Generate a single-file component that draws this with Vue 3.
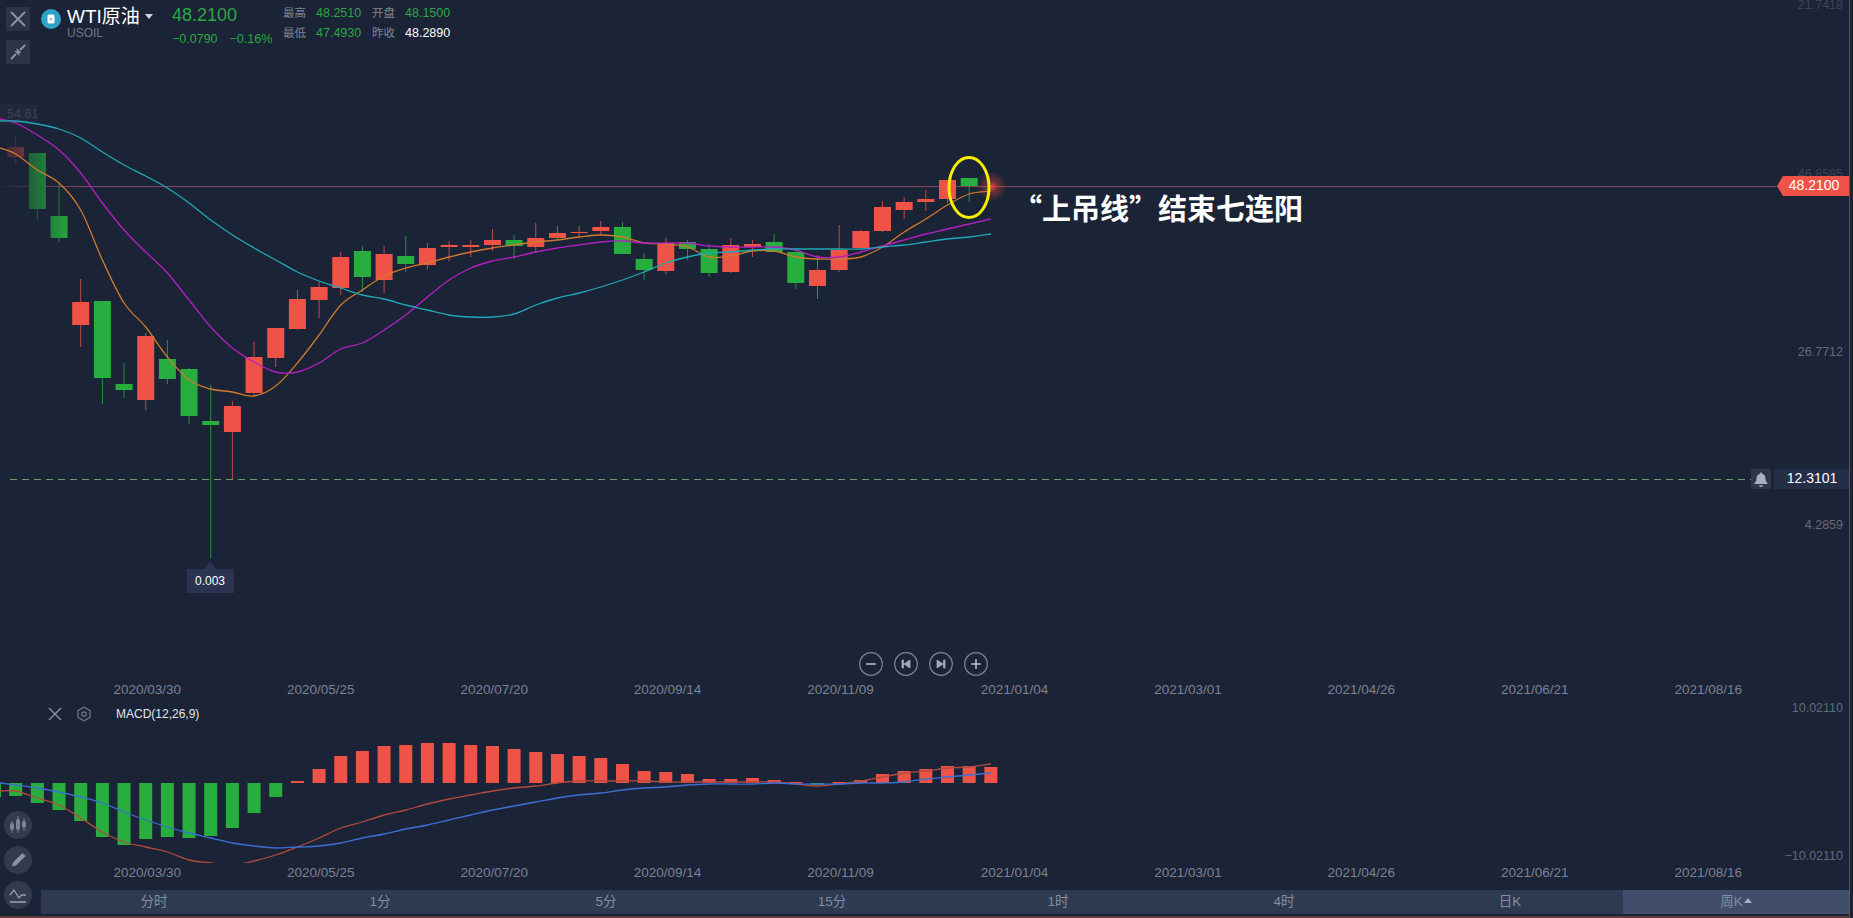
<template>
  <div class="page">
    <!-- main k-line pane -->
    <section class="main-pane">
      <svg class="chart" viewBox="0 0 1853 680" width="1853" height="680">
        <defs>
          <linearGradient id="left-fade" x1="0" x2="1" y1="0" y2="0">
            <stop offset="0" stop-color="#1b2336" stop-opacity="0.92" />
            <stop offset="1" stop-color="#1b2336" stop-opacity="0" />
          </linearGradient>
          <radialGradient id="last-glow">
            <stop offset="0" stop-color="#ff4a3c" stop-opacity="0.9" />
            <stop offset="0.35" stop-color="#ff4a3c" stop-opacity="0.35" />
            <stop offset="1" stop-color="#ff4a3c" stop-opacity="0" />
          </radialGradient>
        </defs>

        <text class="axis faint" x="1843" y="6" text-anchor="end">21.7418</text>
        <text class="axis faint" x="1843" y="175" text-anchor="end">46.8585</text>
        <text class="axis" x="1843" y="353" text-anchor="end">26.7712</text>
        <text class="axis" x="1843" y="526" text-anchor="end">4.2859</text>

        <line x1="0" x2="1777" y1="186.5" y2="186.5" stroke="#84465a" />
        <line x1="10" x2="1751" y1="479.5" y2="479.5" stroke="#6a9a6c" stroke-dasharray="7 5" />

        <g v-for="c in candles" :key="c.i" :fill="tone(c.t)" :stroke="tone(c.t)">
          <line :x1="cx(c.i)" :x2="cx(c.i)" :y1="c.wt" :y2="c.wb" stroke-width="1" stroke-opacity="0.8" />
          <rect :x="cx(c.i) - 8.5" :y="c.top" width="17" :height="c.bot - c.top" stroke="none" />
        </g>

        <rect x="0" y="100" width="75" height="150" fill="url(#left-fade)" />
        <rect x="0" y="103" width="38" height="22" fill="#232b3e" opacity="0.7" />
        <text class="axis faint" x="7" y="115">54.61</text>

        <path :d="smooth(ma5)" class="ma" stroke="#cf7a2b" />
        <path :d="smooth(ma10)" class="ma" stroke="#b41fc4" stroke-width="1.6" />
        <path :d="smooth(ma20)" class="ma" stroke="#1fa9b8" />

        <circle cx="992" cy="186.5" r="15" fill="url(#last-glow)" />
        <ellipse cx="969" cy="187.5" rx="20" ry="30" fill="none" stroke="#f8f000" stroke-width="3" />

        <!-- lowest price tip -->
        <path d="M187 569h17l6-8 6 8h18v24h-47z" fill="#2a3450" />
        <text class="tip" x="210" y="582" text-anchor="middle">0.003</text>

        <!-- right price tags -->
        <path d="M1783 176h68v20h-68l-6-10z" fill="#ef5347" />
        <text class="tag" x="1814" y="186.5" text-anchor="middle">48.2100</text>
        <rect x="1751" y="469" width="20" height="20" rx="1" fill="#2e3547" />
        <path
          d="M1761 472.5a1.2 1.2 0 0 1 1.2 1.2c2.4.7 3.3 2.6 3.3 5 0 2 .8 3 2 4.2v1.1h-13v-1.1c1.200-1.200 2-2.200 2-4.200 0-2.400.9-4.300 3.300-5a1.200 1.200 0 0 1 1.200-1.200zM1759 485.200h4a2 1.800 0 0 1-4 0z"
          fill="#a9afbd"
        />
        <rect x="1774" y="469" width="76" height="20" rx="1" fill="#252e47" />
        <text class="tag" x="1812" y="479.500" text-anchor="middle">12.3101</text>
      </svg>

      <text-note />
      <div class="note">“上吊线”结束七连阳</div>

      <header class="quote-head">
        <div class="tool-col">
          <button class="square-btn">
            <svg width="24" height="24" viewBox="0 0 24 24"><path d="M5 5l14 14M19 5L5 19" stroke="#8f95a3" stroke-width="1.800" fill="none" /></svg>
          </button>
          <button class="square-btn">
            <svg width="24" height="24" viewBox="0 0 24 24">
              <path d="M5 19l5-5M19 5l-5 5" stroke="#8f95a3" stroke-width="1.800" fill="none" />
              <path d="M8.500 11l4.500.5.500 4.500zM15.500 13L11 12.500 10.500 8z" fill="#8f95a3" />
            </svg>
          </button>
        </div>
        <span class="logo">
          <svg width="20" height="20" viewBox="0 0 20 20">
            <circle cx="10" cy="10" r="10" fill="#2fa3c6" />
            <rect x="6.500" y="5.500" width="7" height="9" rx="1.500" fill="#fff" />
            <rect x="9" y="9" width="2" height="2.500" fill="#7cc6dc" />
          </svg>
        </span>
        <div class="name-col">
          <div class="name">WTI原油<i class="caret-down"></i></div>
          <div class="code">USOIL</div>
        </div>
        <div class="price-col">
          <div class="price">48.2100</div>
          <div class="change"><span>−0.0790</span><span>−0.16%</span></div>
        </div>
        <dl class="stats">
          <template v-for="s in stats" :key="s.label">
            <dt>{{ s.label }}</dt>
            <dd :class="{ flat: s.flat }">{{ s.value }}</dd>
          </template>
        </dl>
      </header>

      <div class="zoom-btns">
        <svg v-for="b in zoomIcons" :key="b" width="24" height="24" viewBox="0 0 24 24">
          <circle cx="12" cy="12" r="11.300" fill="none" stroke="#7f8696" stroke-width="1.200" />
          <path :d="b" fill="#a4aab7" stroke="#a4aab7" stroke-width="0.800" />
        </svg>
      </div>
    </section>

    <div class="date-axis">
      <span v-for="d in dates" :key="d">{{ d }}</span>
    </div>

    <!-- MACD pane -->
    <section class="macd-pane">
      <svg class="chart" viewBox="0 700 1853 163" width="1853" height="163">
        <rect
          v-for="(b, i) in macdBars"
          :key="i"
          :x="cx(i) - 6.500"
          :y="Math.min(b, zero)"
          width="13"
          :height="Math.max(Math.abs(b - zero), 1.500)"
          :fill="b > zero ? '#27ae3e' : '#ef5347'"
        />
        <rect x="0" y="783" width="1" height="14" fill="#27ae3e" />
        <path :d="smooth(dif)" class="ma" stroke="#b24a3f" />
        <path :d="smooth(dea)" class="ma" stroke="#3a6fd4" />
        <text class="axis" x="1843" y="709" text-anchor="end">10.02110</text>
        <text class="axis" x="1843" y="857" text-anchor="end">−10.02110</text>
      </svg>

      <div class="macd-head">
        <svg width="16" height="16" viewBox="0 0 16 16"><path d="M2 2l12 12M14 2L2 14" stroke="#8f95a3" stroke-width="1.400" fill="none" /></svg>
        <svg width="16" height="16" viewBox="0 0 16 16">
          <path d="M8 1.200l6 3.400v6.800l-6 3.400-6-3.400V4.600z" fill="none" stroke="#6f7686" stroke-width="1.300" />
          <circle cx="8" cy="8" r="2.200" fill="none" stroke="#6f7686" stroke-width="1.300" />
        </svg>
        <span class="macd-name">MACD(12,26,9)</span>
      </div>
    </section>

    <div class="date-axis">
      <span v-for="d in dates" :key="d">{{ d }}</span>
    </div>

    <div class="foot">
      <div class="round-tools">
        <span class="round">
          <svg width="20" height="20" viewBox="0 0 20 20" fill="#7d8493">
            <rect x="2" y="8" width="4" height="7" rx="2" /><rect x="8" y="4" width="4" height="11" rx="2" /><rect x="14" y="6" width="4" height="7" rx="2" />
            <path d="M4 6v12M10 1v17M16 3v13" stroke="#7d8493" />
          </svg>
        </span>
        <span class="round">
          <svg width="20" height="20" viewBox="0 0 20 20">
            <path d="M4 16.500l1-4L14.500 3l3 3L8 15.500z" fill="#8b92a0" />
          </svg>
        </span>
        <span class="round">
          <svg width="22" height="22" viewBox="0 0 22 22" fill="none" stroke="#9aa0ad" stroke-width="1.300">
            <path d="M3 11l4-5 5 8 2.500-3H19" />
            <path d="M3 18h16" stroke-width="1.600" />
          </svg>
        </span>
      </div>
      <nav class="tabs">
        <span v-for="t in tabs" :key="t" class="tab" :class="{ active: t === '周K' }">
          {{ t }}<i v-if="t === '周K'" class="caret-up"></i>
        </span>
      </nav>
    </div>
  </div>
</template>

<script setup>
// weekly candles, all values in page pixels: [top, bottom, wickTop, wickBottom, tone]
const rows = [
  [147, 157, 137, 165, 'r'], [153, 209, 153, 220, 'g'], [216, 238, 183, 242, 'g'], [302, 325, 279, 347, 'r'],
  [301, 378, 301, 404, 'g'], [384, 390, 363, 398, 'g'], [336, 400, 333, 410, 'r'], [359, 379, 340, 384, 'g'],
  [369, 416, 368, 424, 'g'], [421, 425, 385, 558, 'g'], [406, 432, 401, 479, 'r'], [357, 393, 342, 397, 'r'],
  [328, 358, 328, 367, 'r'], [299, 329, 290, 330, 'r'], [287, 300, 282, 318, 'r'], [257, 288, 252, 295, 'r'],
  [251, 277, 246, 292, 'g'], [254, 280, 246, 293, 'r'], [256, 264, 236, 272, 'g'], [248, 265, 243, 269, 'r'],
  [245, 247, 241, 261, 'r'], [245, 247, 240, 257, 'r'], [240, 245, 229, 251, 'r'], [240, 246, 235, 259, 'g'],
  [238, 247, 223, 253, 'r'], [233, 238, 226, 240, 'r'], [232, 233, 226, 238, 'r'], [227, 231, 221, 235, 'r'],
  [227, 254, 222, 254, 'g'], [259, 270, 253, 280, 'g'], [243, 271, 238, 274, 'r'], [242, 249, 240, 260, 'g'],
  [249, 273, 244, 277, 'g'], [245, 272, 238, 273, 'r'], [244, 247, 240, 257, 'r'], [242, 252, 234, 252, 'g'],
  [252, 283, 248, 289, 'g'], [270, 286, 255, 299, 'r'], [250, 270, 225, 272, 'r'], [231, 248, 230, 248, 'r'],
  [207, 231, 201, 232, 'r'], [202, 210, 197, 219, 'r'], [199, 202, 190, 211, 'r'], [180, 199, 180, 203, 'r'],
  [178, 186, 178, 202, 'g'],
]
const candles = rows.map((r, i) => ({ i, top: r[0], bot: r[1], wt: r[2], wb: r[3], t: r[4] }))

const ma5 = [148, 154, 170, 183, 210, 260, 303, 327, 357, 380, 389, 392, 396, 386, 363, 335, 305, 290, 276, 268, 263, 257, 252, 248,
  245, 242, 240, 237, 235, 237, 243, 244, 247, 257, 256, 251, 251, 257, 259, 259, 257, 247, 232, 219, 205, 194, 191]
const ma10 = [119, 123, 135, 150, 173, 203, 230, 252, 273, 300, 327, 348, 362, 372, 372, 363, 349, 343, 330, 315, 297, 280, 268, 261,
  257, 252, 248, 245, 242, 241, 243, 243, 243, 246, 247, 247, 247, 250, 257, 257, 252, 246, 240, 234, 229, 224, 219]
const ma20 = [121, 121, 124, 129, 138, 152, 165, 176, 188, 203, 220, 235, 248, 260, 272, 281, 288, 295, 299, 305, 310, 315, 317, 317,
  314, 305, 298, 293, 287, 280, 272, 263, 257, 253, 252, 250, 249, 249, 249, 249, 249, 247, 245, 242, 239, 237, 234]

const zero = 783
const macdBars = [796, 803, 810, 821, 837, 845, 839, 837, 838, 836, 828, 813, 797, 781, 769, 756, 751, 746, 745, 743, 743, 745, 746,
  749, 752, 754, 756, 758, 764, 771, 772, 774, 779, 779, 778, 780, 782, 785, 782, 780, 774, 771, 769, 766, 766, 767]
const dif = [791, 791, 798, 805, 818, 832, 842, 847, 852, 860, 863, 865, 861, 855, 847, 838, 828, 822, 815, 810, 804, 799, 795, 791, 788,
  786, 783, 781, 781, 781, 781, 782, 782, 782, 782, 782, 782, 784, 786, 784, 781, 777, 773, 771, 768, 767, 764]
const dea = [783, 785, 788, 792, 797, 803, 812, 820, 827, 833, 838, 843, 846, 848, 847, 846, 843, 838, 834, 829, 825, 820, 815, 810, 806,
  802, 798, 795, 793, 790, 788, 787, 785, 784, 784, 784, 783, 784, 784, 784, 783, 783, 782, 779, 777, 775, 773]

const cx = (i) => 15.7 + 21.67 * i
const tone = (t) => (t === 'r' ? '#ef5347' : '#27ae3e')

// first value sits on the left page edge, the rest on candle centres
function smooth(ys) {
  const pts = ys.map((y, i) => [i === 0 ? 0 : cx(i - 1), y])
  let d = `M${pts[0][0]} ${pts[0][1]}`
  for (let i = 0; i < pts.length - 1; i++) {
    const p0 = pts[i - 1] || pts[i]
    const p1 = pts[i]
    const p2 = pts[i + 1]
    const p3 = pts[i + 2] || p2
    const c1 = [p1[0] + (p2[0] - p0[0]) / 6, p1[1] + (p2[1] - p0[1]) / 6]
    const c2 = [p2[0] - (p3[0] - p1[0]) / 6, p2[1] - (p3[1] - p1[1]) / 6]
    d += `C${c1[0].toFixed(1)} ${c1[1].toFixed(1)} ${c2[0].toFixed(1)} ${c2[1].toFixed(1)} ${p2[0].toFixed(1)} ${p2[1]}`
  }
  return d
}

const stats = [
  { label: '最高', value: '48.2510' },
  { label: '开盘', value: '48.1500' },
  { label: '最低', value: '47.4930' },
  { label: '昨收', value: '48.2890', flat: true },
]
const zoomIcons = [
  'M7.500 11.500h9v1h-9z',
  'M8 8h1.500v8H8zM16 8v8l-6-4z',
  'M14.500 8H16v8h-1.500zM8 8v8l6-4z',
  'M7.500 11.500h9v1h-9zM11.500 7.500h1v9h-1z',
]
const dates = ['2020/03/30', '2020/05/25', '2020/07/20', '2020/09/14', '2020/11/09', '2021/01/04', '2021/03/01', '2021/04/26', '2021/06/21', '2021/08/16']
const tabs = ['分时', '1分', '5分', '15分', '1时', '4时', '日K', '周K']
</script>

<style>
html, body { margin: 0; background: #1b2336; }
</style>

<style scoped>
.page {
  width: 1853px;
  height: 918px;
  box-sizing: border-box;
  display: flex;
  flex-direction: column;
  position: relative;
  overflow: hidden;
  background: #1b2336;
  border-right: 3px solid transparent;
  font-family: "Liberation Sans", "Noto Sans CJK SC", sans-serif;
  color: #8a91a1;
}
.page::after {
  content: "";
  position: absolute;
  right: 0;
  top: 0;
  bottom: 0;
  width: 1px;
  background: #6a504e;
}
.page::before {
  content: "";
  position: absolute;
  left: 0;
  right: 0;
  bottom: 0;
  height: 2px;
  background: #5e3c38;
}

.main-pane { position: relative; height: 680px; flex: none; }
.macd-pane { position: relative; height: 163px; flex: none; }
.chart { position: absolute; left: 0; top: 0; display: block; }
.ma { fill: none; stroke-width: 1.300; stroke-linejoin: round; }

.axis { font-size: 12.500px; fill: #626a7b; dominant-baseline: middle; }
.faint { fill: #3c4457; }
.tip { font-size: 12px; fill: #fff; dominant-baseline: middle; }
.tag { font-size: 14px; fill: #fff; dominant-baseline: middle; }

.note {
  position: absolute;
  left: 1013px;
  top: 187px;
  font-family: "Noto Sans CJK SC", sans-serif;
  font-size: 29px;
  line-height: 40px;
  font-weight: 700;
  color: #fff;
  white-space: nowrap;
}

.quote-head {
  position: absolute;
  left: 6px;
  top: 7px;
  display: flex;
  align-items: flex-start;
}
.tool-col { display: flex; flex-direction: column; gap: 9px; margin-right: 11px; }
.square-btn {
  width: 24px;
  height: 24px;
  padding: 0;
  border: 0;
  background: #2c3344;
  display: block;
}
.square-btn svg { display: block; }
.logo { margin: 2px 6px 0 0; height: 20px; }
.logo svg { display: block; }
.name-col { width: 105px; }
.name {
  font-size: 19px;
  line-height: 20px;
  color: #fff;
  white-space: nowrap;
}
.caret-down {
  display: inline-block;
  margin-left: 5px;
  vertical-align: 4px;
  border: 4.500px solid transparent;
  border-top: 5px solid #d5d8df;
  border-bottom: 0;
}
.code { font-size: 12px; line-height: 13px; margin-top: 0; color: #6f7686; }

.price-col { width: 111px; margin-top: -1px; }
.price { font-size: 18px; line-height: 18px; color: #2aa843; }
.change {
  display: flex;
  gap: 12px;
  margin-top: 8px;
  font-size: 12.500px;
  line-height: 14px;
  color: #2aa843;
  white-space: nowrap;
}

.stats {
  display: grid;
  grid-template-columns: 33px 56px 33px auto;
  row-gap: 6px;
  margin: -1px 0 0;
  font-size: 12.500px;
  line-height: 14px;
}
.stats dt { font-size: 11.500px; color: #7f8696; }
.stats dd { margin: 0; color: #2aa843; }
.stats dd.flat { color: #fff; }

.zoom-btns {
  position: absolute;
  left: 859px;
  top: 652px;
  display: flex;
  gap: 11px;
}

.date-axis {
  height: 20px;
  flex: none;
  display: flex;
  padding-left: 113.500px;
  font-size: 13.500px;
  line-height: 20px;
  color: #7b8292;
}
.date-axis span { width: 173.450px; flex: none; }

.macd-head {
  position: absolute;
  left: 47px;
  top: 6px;
  display: flex;
  align-items: center;
  gap: 13px;
}
.macd-head svg { display: block; }
.macd-name { margin-left: 11px; font-size: 12px; color: #e4e6ea; }

.foot { flex: none; position: relative; padding-top: 7px; }
.round-tools {
  position: absolute;
  left: 4px;
  bottom: 5px;
  display: flex;
  flex-direction: column;
  gap: 7px;
}
.round {
  width: 28px;
  height: 28px;
  border-radius: 50%;
  background: #333a4b;
  display: flex;
  align-items: center;
  justify-content: center;
}
.tabs {
  margin-left: 41px;
  width: 1808px;
  height: 24px;
  display: grid;
  grid-template-columns: repeat(8, 1fr);
  background: #2d3a52;
  font-size: 13.500px;
  line-height: 24px;
  text-align: center;
  color: #858da0;
}
.tab.active { background: #414e6b; }
.caret-up {
  display: inline-block;
  margin-left: 1px;
  vertical-align: 3px;
  border: 4.500px solid transparent;
  border-bottom: 5px solid #a5abb9;
  border-top: 0;
}
</style>
